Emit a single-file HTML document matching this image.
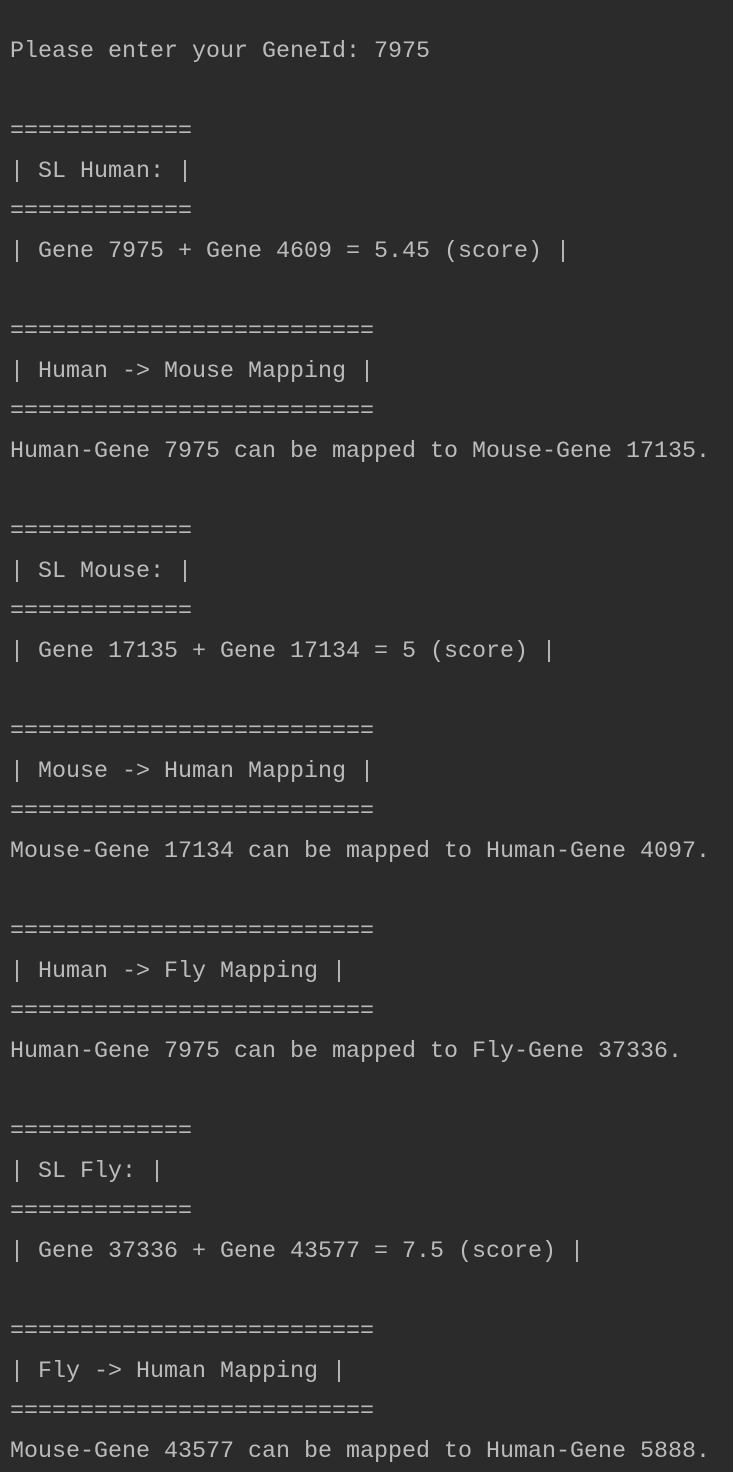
<!DOCTYPE html>
<html><head><style>
html,body{margin:0;padding:0;background:#2b2b2b;width:733px;height:1471px;overflow:hidden}
pre{margin:0;position:absolute;left:10px;top:32px;font-family:"Liberation Mono",monospace;font-size:23.33px;line-height:40px;color:#bbbbbb;white-space:pre}
</style></head><body><pre>Please enter your GeneId: 7975

=============
| SL Human: |
=============
| Gene 7975 + Gene 4609 = 5.45 (score) |

==========================
| Human -> Mouse Mapping |
==========================
Human-Gene 7975 can be mapped to Mouse-Gene 17135.

=============
| SL Mouse: |
=============
| Gene 17135 + Gene 17134 = 5 (score) |

==========================
| Mouse -> Human Mapping |
==========================
Mouse-Gene 17134 can be mapped to Human-Gene 4097.

==========================
| Human -> Fly Mapping |
==========================
Human-Gene 7975 can be mapped to Fly-Gene 37336.

=============
| SL Fly: |
=============
| Gene 37336 + Gene 43577 = 7.5 (score) |

==========================
| Fly -> Human Mapping |
==========================
Mouse-Gene 43577 can be mapped to Human-Gene 5888.</pre></body></html>
